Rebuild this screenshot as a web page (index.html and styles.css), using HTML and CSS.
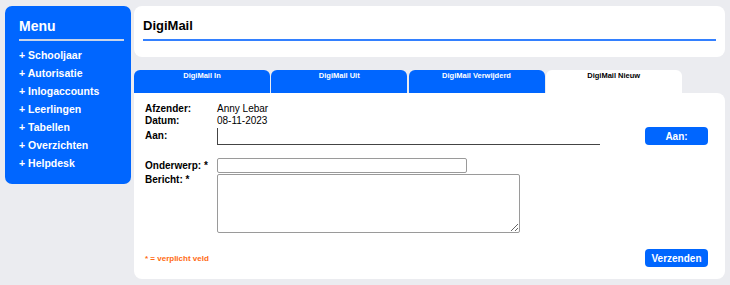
FILE: index.html
```html
<!DOCTYPE html>
<html lang="nl">
<head>
  <meta charset="UTF-8" />
  <meta name="viewport" content="width=device-width, initial-scale=1.0" />
  <title>DigiMail</title>
  <link rel="stylesheet" href="styles.css">
</head>
<body>
  <div class="page">
    <nav class="menu">
      <h2>Menu</h2>
      <ul>
        <li>+ Schooljaar</li>
        <li>+ Autorisatie</li>
        <li>+ Inlogaccounts</li>
        <li>+ Leerlingen</li>
        <li>+ Tabellen</li>
        <li>+ Overzichten</li>
        <li>+ Helpdesk</li>
      </ul>
    </nav>

    <main class="main">
      <div class="header-card">
        <h1>DigiMail</h1>
      </div>

      <div class="tabs">
        <div class="tab">DigiMail In</div>
        <div class="tab">DigiMail Uit</div>
        <div class="tab">DigiMail Verwijderd</div>
        <div class="tab active">DigiMail Nieuw</div>
      </div>

      <form class="content" onsubmit="return false">
        <div class="row">
          <span class="label">Afzender:</span>
          <span>Anny Lebar</span>
        </div>
        <div class="row">
          <span class="label">Datum:</span>
          <span>08-11-2023</span>
        </div>
        <div class="row row-aan">
          <span class="label">Aan:</span>
          <div class="to-box"></div>
          <button type="button" class="btn">Aan:</button>
        </div>
        <div class="row row-subject">
          <label class="label" for="subject">Onderwerp: *</label>
          <input type="text" id="subject" />
        </div>
        <div class="row row-body">
          <label class="label" for="body">Bericht: *</label>
          <textarea id="body"></textarea>
        </div>
        <div class="footer">
          <span class="required">* = verplicht veld</span>
          <button type="submit" class="btn">Verzenden</button>
        </div>
      </form>
    </main>
  </div>
</body>
</html>
```

FILE: styles.css
```css
body {
  margin: 0;
  background: #ebecf0;
  font-family: "Liberation Sans", Arial, sans-serif;
  color: #000;
}
.page {
  display: flex;
  align-items: flex-start;
  gap: 3px;
  padding: 6px 5px;
}

/* sidebar */
.menu {
  width: 126px;
  box-sizing: border-box;
  background: #0066ff;
  color: #fff;
  border-radius: 7px;
  padding: 12px 7px 12px 14px;
}
.menu h2 {
  margin: 0;
  font-size: 14px;
  line-height: 17px;
  padding-bottom: 4px;
  border-bottom: 2px solid #c9d4e8;
}
.menu ul {
  list-style: none;
  margin: 5px 0 0;
  padding: 0;
}
.menu li {
  font-size: 10.5px;
  font-weight: bold;
  line-height: 18px;
}

/* main column */
.main {
  flex: 1;
}
.header-card {
  background: #fff;
  border-radius: 8px;
  height: 51px;
  box-sizing: border-box;
  padding: 12px 9px 0;
}
.header-card h1 {
  margin: 0;
  font-size: 13px;
  line-height: 16px;
  padding-bottom: 5px;
  border-bottom: 2px solid #3380ff;
}

.tabs {
  display: flex;
  gap: 1.25px;
  margin-top: 13px;
}
.tab {
  width: 136px;
  height: 23px;
  box-sizing: border-box;
  padding-top: 1px;
  background: #0066ff;
  color: #fff;
  font-size: 7.5px;
  font-weight: bold;
  line-height: 10px;
  text-align: center;
  border-radius: 6px 6px 0 0;
}
.tab.active {
  background: #fff;
  color: #000;
}

.content {
  margin: 0;
  background: #fff;
  border-radius: 0 8px 8px 8px;
  padding: 10px 17px 12px 11px;
  font-size: 10px;
}
.row {
  display: flex;
  line-height: 12px;
}
.label {
  width: 72px;
  flex-shrink: 0;
  font-weight: bold;
}
.row-aan {
  align-items: center;
  height: 18px;
}
.to-box {
  width: 383px;
  height: 17px;
  box-sizing: border-box;
  margin-top: 1px;
  border-left: 1px solid #444;
  border-bottom: 1px solid #444;
}
.row-aan .btn {
  margin-left: auto;
}
.row-subject {
  align-items: center;
  margin-top: 13px;
}
.row-subject input {
  width: 250px;
  height: 15px;
  box-sizing: border-box;
  margin: 0;
  padding: 0 3px;
  border: 1px solid #9a9a9a;
  border-radius: 2px;
  font: inherit;
}
.row-body {
  margin-top: 1px;
  align-items: flex-start;
}
.row-body label {
  line-height: 12px;
}
.row-body textarea {
  width: 303px;
  height: 59px;
  box-sizing: border-box;
  margin: 0;
  border: 1px solid #9a9a9a;
  border-radius: 2px;
  font: inherit;
}

.footer {
  display: flex;
  justify-content: space-between;
  align-items: center;
  margin-top: 16px;
}
.required {
  color: #ff6a13;
  font-size: 8px;
  font-weight: bold;
}
.btn {
  width: 63px;
  height: 18px;
  padding: 0;
  border: none;
  border-radius: 4px;
  background: #0066ff;
  color: #fff;
  font-family: "Liberation Sans", Arial, sans-serif;
  font-size: 10px;
  font-weight: bold;
}
```
